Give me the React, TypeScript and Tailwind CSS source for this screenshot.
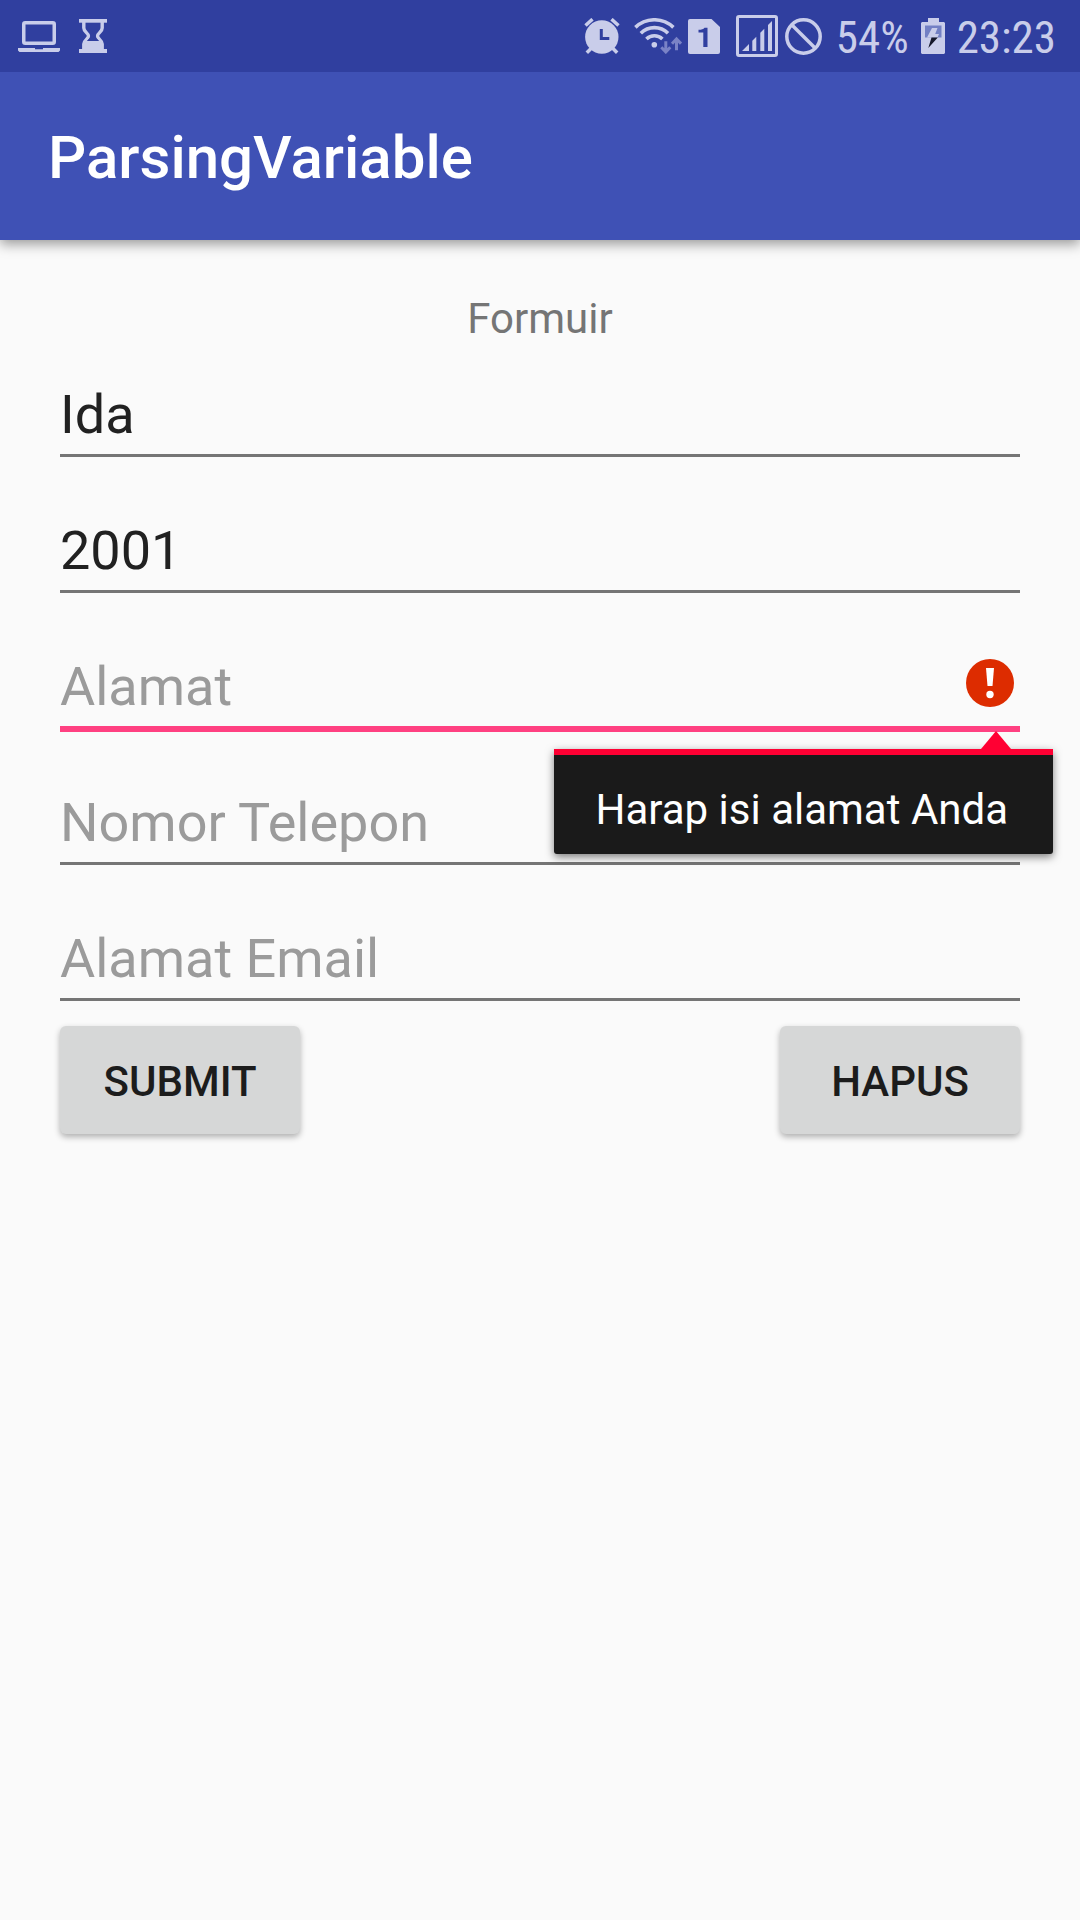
import { useState } from "react";
import type { ReactNode } from "react";

type IconProps = { className: string };

function LaptopIcon({ className }: IconProps) {
  return (
    <svg className={className} viewBox="0 0 42 31" fill="none" aria-hidden="true">
      <rect x="5.75" y="1.75" width="30.5" height="20.5" rx="1.5" stroke="currentColor" strokeWidth="3.5" />
      <path d="M0 27h17v1.3h8V27h17v2.5L40.500 31h-39L0 29.500z" fill="currentColor" />
    </svg>
  );
}

function HourglassIcon({ className }: IconProps) {
  return (
    <svg className={className} viewBox="0 0 28 34" fill="none" aria-hidden="true">
      <path d="M0 0h28v3.700H0z" fill="currentColor" />
      <path
        d="M4.800 3v6c0 4 4.700 5 4.700 8s-4.700 4-4.700 8v6M23.200 3v6c0 4-4.700 5-4.700 8s4.700 4 4.700 8v6"
        stroke="currentColor"
        strokeWidth="3.400"
      />
      <path d="M4 22h20v8h4v4H0v-4h4z" fill="currentColor" />
      <path d="M11.500 14.500h5v4L20 22H8l3.500-3.500z" fill="#303F9F" />
    </svg>
  );
}

function AlarmIcon({ className }: IconProps) {
  return (
    <svg className={className} viewBox="0 0 36 36" aria-hidden="true">
      <g stroke="currentColor" strokeWidth="3.500">
        <path d="M1.500 7.500 8.500 1.200M34.500 7.500 27.500 1.200" />
        <path d="M2.800 34.700 8 29.500M33.200 34.700 28 29.500" />
      </g>
      <circle cx="17.800" cy="19" r="16.700" fill="currentColor" />
      <path d="M17.300 11v9.500h8" fill="none" stroke="#303F9F" strokeWidth="3" />
    </svg>
  );
}

function WifiIcon({ className }: IconProps) {
  return (
    <svg className={className} viewBox="0 0 48 36" fill="none" aria-hidden="true">
      <g stroke="currentColor" strokeWidth="3.600">
        <path d="M1.400 9.400a27.500 27.500 0 0 1 38 0" />
        <path d="M6.800 15.200a19.500 19.500 0 0 1 27.200 0" />
        <path d="M12.400 21a11.500 11.500 0 0 1 16 0" />
      </g>
      <circle cx="20.300" cy="26.700" r="2.800" fill="currentColor" />
      <g stroke="#7A83C6" strokeWidth="3">
        <path d="M31.800 23.300v10M27.300 29.300l4.500 4.700 4.500-4.700" />
        <path d="M42.500 32.300V21.500M38 25.700l4.500-4.700 4.500 4.700" />
      </g>
    </svg>
  );
}

function SimIcon({ className }: IconProps) {
  return (
    <svg className={className} viewBox="0 0 32 35" aria-hidden="true">
      <path d="M2 0h21.500L32 8v25a2 2 0 0 1-2 2H2a2 2 0 0 1-2-2V2a2 2 0 0 1 2-2z" fill="currentColor" />
      <path d="M10.500 13.500v-2.700c3 0 5-.6 6-2h3V28h-4.200V13.500z" fill="#303F9F" />
    </svg>
  );
}

function SignalIcon({ className }: IconProps) {
  return (
    <svg className={className} viewBox="0 0 42 42" aria-hidden="true">
      <rect x="1.500" y="1.500" width="39" height="39" rx="1.500" fill="none" stroke="currentColor" strokeWidth="3" />
      <path
        d="M6 36l7-7v7zM16.300 25.700l4-4V36h-4zM24.300 17.700l4-4V36h-4zM32 10l4-4v30h-4z"
        fill="currentColor"
      />
    </svg>
  );
}

function BlockedIcon({ className }: IconProps) {
  return (
    <svg className={className} viewBox="0 0 37 37" fill="none" stroke="currentColor" strokeWidth="3.500" aria-hidden="true">
      <circle cx="18.500" cy="18.500" r="16.700" />
      <path d="M6.700 6.700l23.600 23.600" />
    </svg>
  );
}

function BatteryIcon({ className }: IconProps) {
  return (
    <svg className={className} viewBox="0 0 24 36" aria-hidden="true">
      <path d="M7 0h11v4h5l1 1v30l-1 1H1l-1-1V5l1-1h6z" fill="currentColor" />
      <path d="M4 7.500h16.500v12H4z" fill="#7380C4" />
      <path d="M11 10h5.500l-2.300 6H18L16.500 19.500H6z" fill="currentColor" />
      <path d="M6 19.500h4.500L7.300 30 16.800 19.500z" fill="#16182B" />
    </svg>
  );
}

function ErrorIcon({ className }: IconProps) {
  return (
    <svg className={className} viewBox="0 0 48 48" aria-hidden="true">
      <circle cx="24" cy="24" r="24" fill="#DD2C00" />
      <path d="M20 9h8l-1.500 18h-5z" fill="#fff" />
      <circle cx="24" cy="35.500" r="3.700" fill="#fff" />
    </svg>
  );
}

function StatusBar() {
  return (
    <div className="relative z-10 flex h-[72px] items-center justify-between bg-[#303F9F] pl-[18px] pr-6 text-[#C9CDEA]">
      <div className="flex items-center gap-[19px]">
        <LaptopIcon className="h-[31px] w-[42px]" />
        <HourglassIcon className="h-[34px] w-7" />
      </div>
      <div className="flex items-center font-['Roboto_Condensed',Roboto,sans-serif] text-[45px] leading-[54px]">
        <AlarmIcon className="mr-3.5 size-9" />
        <WifiIcon className="mr-1.5 h-9 w-12" />
        <SimIcon className="mr-4 h-[35px] w-8" />
        <SignalIcon className="mr-[7px] size-[42px]" />
        <BlockedIcon className="mr-3.5 size-[37px]" />
        <span className="mr-3 pt-[3px]">54%</span>
        <BatteryIcon className="mr-3 h-9 w-6" />
        <span className="pt-[3px]">23:23</span>
      </div>
    </div>
  );
}

type FieldProps = {
  label: string;
  initial?: string;
  type?: string;
  error?: string;
};

function Field({ label, initial = "", type = "text", error }: FieldProps) {
  const [value, setValue] = useState(initial);
  const line = error
    ? "border-[#FF4081] shadow-[0_3px_0_#FF4081]"
    : "border-[#757575]";
  return (
    <div className="relative">
      <input
        type={type}
        aria-label={label}
        aria-invalid={Boolean(error)}
        placeholder={label}
        value={value}
        onChange={(event) => setValue(event.target.value)}
        className={`block h-[74px] w-full border-b-[3px] bg-transparent pb-[9px] text-[54px] leading-[62px] text-[#212121] outline-none placeholder:text-[#9B9B9B] ${line}`}
      />
      {error && (
        <>
          <ErrorIcon className="absolute right-1.5 top-1 size-12" />
          <div
            role="alert"
            className="absolute right-[-33px] top-full z-10 mt-5 whitespace-nowrap rounded-b-[3px] border-t-[6px] border-[#FF0033] bg-[#1A1A1A] pb-[19px] pl-[42px] pr-[45px] pt-[30px] text-[42px] leading-[50px] text-white shadow-[0_3px_8px_rgba(0,0,0,0.5)]"
          >
            <svg className="absolute -top-6 right-[42px] h-[18px] w-[30px]" viewBox="0 0 30 18" aria-hidden="true">
              <path d="M15 0l15 18H0z" fill="#FF0033" />
            </svg>
            {error}
          </div>
        </>
      )}
    </div>
  );
}

function ActionButton({ children }: { children: ReactNode }) {
  return (
    <button
      type="button"
      className="h-[108px] w-60 rounded-md bg-[#D6D7D7] pt-1 text-[42px] font-medium leading-[50px] text-[#1C1C1C] shadow-[0_3px_6px_rgba(0,0,0,0.3)]"
    >
      {children}
    </button>
  );
}

export default function App() {
  return (
    <div className="min-h-screen bg-[#FAFAFA] font-[Roboto,sans-serif]">
      <StatusBar />
      <header className="flex h-[168px] items-center bg-[#3F51B5] px-12 pt-1 shadow-[0_4px_12px_rgba(0,0,0,0.4)]">
        <h1 className="text-[60px] font-medium leading-[70px] text-white">ParsingVariable</h1>
      </header>
      <form className="px-[60px] pt-[54px]">
        <h2 className="text-center text-[42px] leading-[50px] text-[#757575]">Formuir</h2>
        <div className="mt-[39px] flex flex-col gap-[62px]">
          <Field label="Nama" initial="Ida" />
          <Field label="Tahun" initial="2001" />
          <Field label="Alamat" error="Harap isi alamat Anda" />
          <Field label="Nomor Telepon" type="tel" />
          <Field label="Alamat Email" type="email" />
        </div>
        <div className="mt-[25px] flex justify-between">
          <ActionButton>SUBMIT</ActionButton>
          <ActionButton>HAPUS</ActionButton>
        </div>
      </form>
    </div>
  );
}
